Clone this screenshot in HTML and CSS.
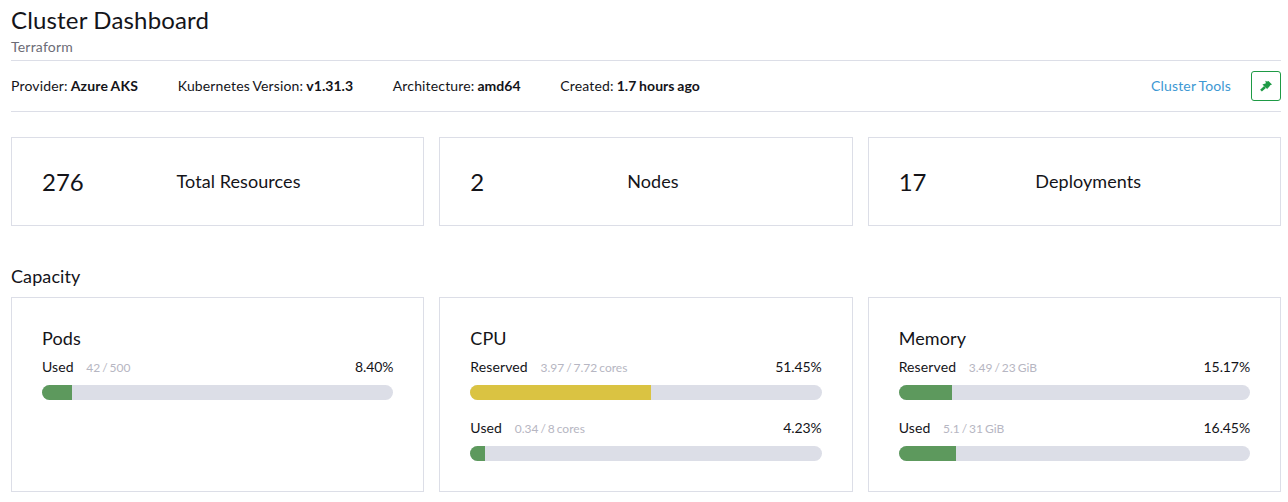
FILE: index.html
```html
<!DOCTYPE html>
<html lang="en">
<head>
<meta charset="utf-8">
<title>Cluster Dashboard</title>
<link rel="stylesheet" href="styles.css">
</head>
<body>
<main class="dashboard">
  <header class="page-header">
    <h1 class="title">Cluster Dashboard</h1>
    <p class="subtitle">Terraform</p>
  </header>
  <section class="glance">
    <div class="item">Provider: <b class="provider">Azure AKS</b></div>
    <div class="item">Kubernetes Version: <b>v1.31.3</b></div>
    <div class="item">Architecture: <b>amd64</b></div>
    <div class="item">Created: <b>1.7 hours ago</b></div>
    <a class="tools">Cluster Tools</a>
    <button class="pin" aria-label="Customize">
      <svg width="14" height="14" viewBox="0 0 14 14"><path d="M6.3 1.8 8 2.5 9.5 1.9 13 5.4 11.2 6.2 9.7 8.4 8.8 8.7 8.4 10.3 3.4 5.6 5 5.1 6.9 4.3Z" fill="#1e9a45"/><path d="M6 8 2 11.6" stroke="#1e9a45" stroke-width="2.6"/></svg>
    </button>
  </section>
  <section class="grid counts">
    <div class="card count"><span class="number">276</span><span class="label">Total Resources</span></div>
    <div class="card count"><span class="number">2</span><span class="label">Nodes</span></div>
    <div class="card count"><span class="number">17</span><span class="label">Deployments</span></div>
  </section>
  <h2 class="section-title">Capacity</h2>
  <section class="grid capacity">
    <div class="card gauge">
      <h3 class="gauge-title">Pods</h3>
      <div class="row"><span class="name">Used</span><span class="detail">42 / 500</span><span class="percent">8.40%</span></div>
      <div class="bar"><div class="fill" style="width:8.4%"></div></div>
    </div>
    <div class="card gauge">
      <h3 class="gauge-title">CPU</h3>
      <div class="row"><span class="name">Reserved</span><span class="detail">3.97 / 7.72 cores</span><span class="percent">51.45%</span></div>
      <div class="bar"><div class="fill warn" style="width:51.45%"></div></div>
      <div class="row"><span class="name">Used</span><span class="detail">0.34 / 8 cores</span><span class="percent">4.23%</span></div>
      <div class="bar"><div class="fill" style="width:4.23%"></div></div>
    </div>
    <div class="card gauge">
      <h3 class="gauge-title">Memory</h3>
      <div class="row"><span class="name">Reserved</span><span class="detail">3.49 / 23 GiB</span><span class="percent">15.17%</span></div>
      <div class="bar"><div class="fill" style="width:15.17%"></div></div>
      <div class="row"><span class="name">Used</span><span class="detail">5.1 / 31 GiB</span><span class="percent">16.45%</span></div>
      <div class="bar"><div class="fill" style="width:16.45%"></div></div>
    </div>
  </section>
</main>
</body>
</html>
```
FILE: styles.css
```css
* { box-sizing: border-box; }
body { margin: 0; background: #fff; color: #141419; font: 14px/20px Lato, sans-serif; }
h1, h2, h3, p { margin: 0; font-weight: 400; }
.dashboard { padding: 5px 7px 0 11px; }
.page-header { height: 56px; border-bottom: 1px solid #dcdee7; }
.title { font-size: 24px; line-height: 29px; letter-spacing: 0.16px; }
.subtitle { margin-top: 3px; color: #6c6c76; letter-spacing: 0.2px; }
.glance { display: flex; align-items: center; height: 51px; border-bottom: 1px solid #dcdee7; letter-spacing: 0.15px; word-spacing: -0.7px; }
.item { margin-right: 39.6px; }
.item b { letter-spacing: 0.05px; }
.item .provider { letter-spacing: 0.2px; }
.tools { margin-left: auto; margin-right: 20px; color: #3d98d3; }
.pin { display: flex; align-items: center; justify-content: center; width: 30px; height: 30px; padding: 0; background: #fff; border: 1px solid #1e9a45; border-radius: 3px; }
.grid { display: grid; grid-template-columns: repeat(3, 1fr); column-gap: 15px; }
.card { border: 1px solid #dcdee7; }
.counts { margin-top: 25px; }
.count { display: flex; align-items: center; height: 89px; padding: 0 30px; }
.number { font-size: 24px; line-height: 30px; }
.label { flex: 1; padding-bottom: 2px; text-align: center; font-size: 18px; letter-spacing: 0.08px; }
.section-title { margin-top: 39px; font-size: 18px; line-height: 22px; letter-spacing: 0.1px; }
.capacity { margin-top: 10px; }
.gauge { height: 195px; padding: 29px 30px 30px; }
.gauge-title { font-size: 18px; line-height: 22px; margin-bottom: 8px; letter-spacing: 0.1px; }
.row { display: flex; align-items: center; height: 20px; }
.name { letter-spacing: 0.12px; }
.detail { margin-left: 12.6px; padding-top: 2px; font-size: 12px; color: #b6b6c2; word-spacing: -1.2px; letter-spacing: 0.03px; }
.percent { margin-left: auto; letter-spacing: -0.1px; }
.bar { height: 15px; margin: 8px 0 18px; border-radius: 8px; overflow: hidden; background: #dcdee7; }
.fill { height: 100%; background: #5d995d; }
.fill.warn { background: #dac342; }
```
